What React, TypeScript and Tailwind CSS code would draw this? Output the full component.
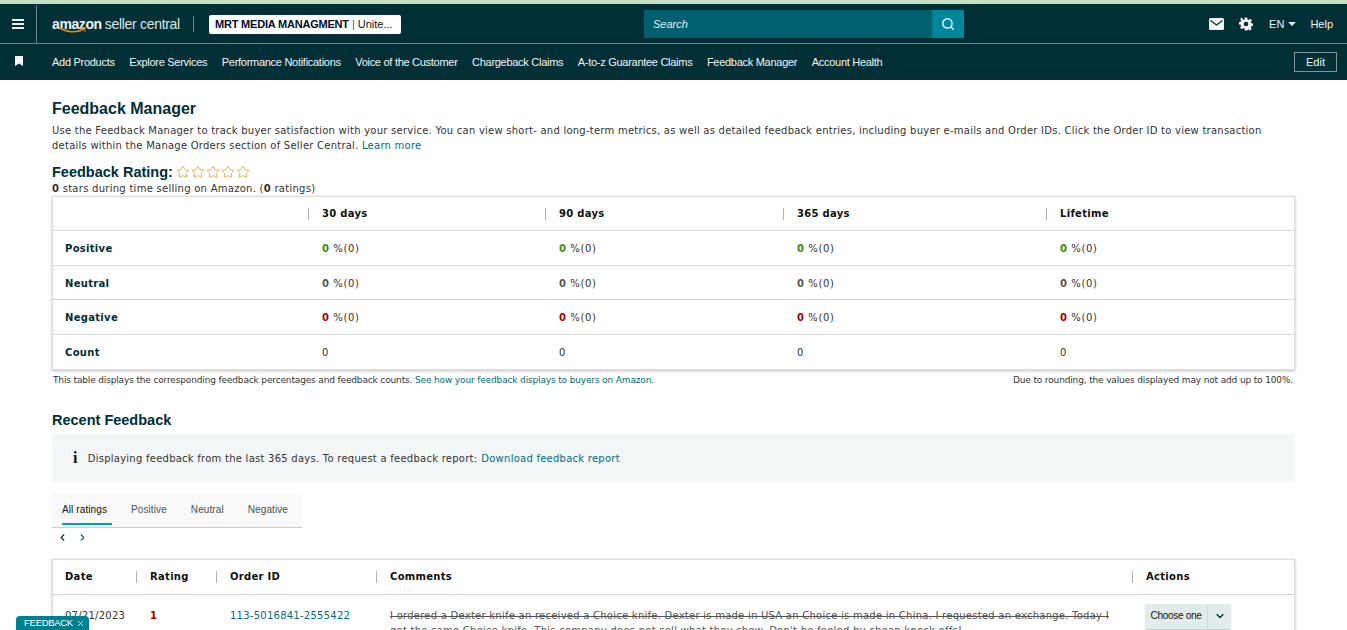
import { ChevronDown, ChevronLeft, ChevronRight, Search, Star, X } from "lucide-react";

const navLinks = [
  "Add Products",
  "Explore Services",
  "Performance Notifications",
  "Voice of the Customer",
  "Chargeback Claims",
  "A-to-z Guarantee Claims",
  "Feedback Manager",
  "Account Health",
];

const periods = ["30 days", "90 days", "365 days", "Lifetime"];

const ratingRows = [
  { label: "Positive", color: "text-[#3d8c0a]" },
  { label: "Neutral", color: "text-[#555555]" },
  { label: "Negative", color: "text-[#a80000]" },
];

const statsGrid = "grid grid-cols-[255px_237px_238px_263px_1fr]";
const feedbackGrid = "grid grid-cols-[83px_80px_160px_756px_1fr]";

function Header() {
  return (
    <header className="bg-[#002f36] text-white font-['Liberation_Sans',sans-serif]">
      <div className="flex h-[39px] items-center border-b border-[#6b8589]">
        <div className="flex h-full w-[37px] items-center justify-center border-r border-[#6b8589]">
          <svg width="12" height="10" viewBox="0 0 12 10" fill="#e6eeee">
            <rect y="0" width="12" height="2" />
            <rect y="4" width="12" height="2" />
            <rect y="8" width="12" height="2" />
          </svg>
        </div>
        <div className="relative ml-[15px] flex h-full w-[128px] items-center whitespace-nowrap">
          <span className="text-[14px] leading-none font-bold tracking-[-0.4px] text-[#f2f5f5]">amazon</span>
          <span className="ml-[3px] text-[14px] leading-none tracking-[-0.3px] text-[#dfe7e7]">seller central</span>
          <svg className="absolute top-[22px] left-[7px]" width="28" height="7" viewBox="0 0 28 7" fill="none">
            <path d="M1 1c7 4.500 17 5 24 1" stroke="#f08804" strokeWidth="1.500" />
            <path d="M21 1h5v4" stroke="#f08804" strokeWidth="1" />
          </svg>
        </div>
        <div className="ml-[13px] h-[16px] w-px bg-[#6b8589]" />
        <div className="ml-[15px] flex h-[19px] w-[192px] items-center rounded-[2px] bg-white px-[6px] text-[11px] whitespace-nowrap text-[#0f1111]">
          <span className="font-bold tracking-[-0.2px] text-[#000c2a]">MRT MEDIA MANAGMENT</span>
          <span className="mx-[3px] text-[#6c3d91]">|</span>
          <span>Unite...</span>
        </div>
        <div className="ml-[243px] flex h-[28px] w-[320px]">
          <div className="flex flex-1 items-center bg-[#005f6f] pl-[9px] text-[11px] text-[#e3eeef] italic">Search</div>
          <div className="flex w-[32px] items-center justify-center bg-[#00869b]">
            <Search size={14} strokeWidth={2.500} className="text-[#e6f3f5]" />
          </div>
        </div>
        <div className="ml-auto flex items-center pr-[14px] text-[11px] text-[#f0f4f4]">
          <svg width="15" height="12" viewBox="0 0 15 12">
            <rect width="15" height="12" rx="1.500" fill="#f4f6f6" />
            <path d="M1.500 2.500 7.500 7l6-4.500" fill="none" stroke="#002f36" strokeWidth="1.300" />
          </svg>
          <svg className="ml-[15px]" width="14" height="14" viewBox="0 0 24 24" fill="#f4f6f6">
            <path
              fillRule="evenodd"
              d="M10 1h4l.6 3.200 1.900.8 2.700-1.800 2.800 2.800-1.800 2.700.8 1.900 3 .6v4l-3 .6-.8 1.900 1.800 2.700-2.800 2.800-2.700-1.800-1.900.8L14 23h-4l-.6-3.200-1.900-.8-2.700 1.800-2.800-2.800 1.800-2.700-.8-1.900-3-.6v-4l3-.6.8-1.900-1.800-2.700 2.800-2.800L7.500 5l1.900-.8zM12 8a4 4 0 1 0 0 8 4 4 0 0 0 0-8z"
            />
          </svg>
          <span className="ml-[16px]">EN</span>
          <span className="mb-[1px] ml-[4px] h-0 w-0 border-x-[4px] border-t-[4px] border-x-transparent border-t-[#dfe7e7]" />
          <span className="ml-[14px]">Help</span>
        </div>
      </div>
      <div className="flex h-[36px] items-center">
        <div className="flex w-[37px] justify-center pb-[2px]">
          <svg width="8" height="10" viewBox="0 0 8 10" fill="#f4f6f6">
            <path d="M0 0h8v10L4 7.500 0 10z" />
          </svg>
        </div>
        <nav className="ml-[15px] flex gap-[14.500px] text-[11px] tracking-[-0.28px] whitespace-nowrap text-[#f2f6f6]">
          {navLinks.map((link) => (
            <span key={link}>{link}</span>
          ))}
        </nav>
        <button className="mr-[10px] ml-auto h-[20px] w-[43px] border border-[#7d9397] text-[11px] text-[#f2f6f6]">Edit</button>
      </div>
    </header>
  );
}

function StatsTable() {
  return (
    <div className="w-[1243px] border border-[#dddddd] text-[10px] text-[#0f1111] shadow-[0_1px_3px_rgba(0,0,0,0.25)]">
      <div className={`${statsGrid} h-[33px] items-center`}>
        <div />
        {periods.map((period) => (
          <div key={period} className="flex h-[12px] items-center border-l border-[#a9b7b9] pl-[13px] font-bold tracking-[0.3px]">
            {period}
          </div>
        ))}
      </div>
      {ratingRows.map((row) => (
        <div key={row.label} className={`${statsGrid} h-[34.700px] items-center border-t border-[#d5dbdb] pt-[1px]`}>
          <div className="pl-[12px] font-bold tracking-[0.3px] text-[#002f36]">{row.label}</div>
          {periods.map((period) => (
            <div key={period} className="pl-[14px] tracking-[0.6px] text-[#333333]">
              <span className={`font-bold ${row.color}`}>0</span> %(0)
            </div>
          ))}
        </div>
      ))}
      <div className={`${statsGrid} h-[34.700px] items-center border-t border-[#d5dbdb] pt-[1px]`}>
        <div className="pl-[12px] font-bold tracking-[0.3px] text-[#002f36]">Count</div>
        {periods.map((period) => (
          <div key={period} className="pl-[14px] text-[#333333]">
            0
          </div>
        ))}
      </div>
    </div>
  );
}

function RecentFeedback() {
  return (
    <>
      <h2 className="mt-[24px] text-[14.500px] leading-[20px] font-bold text-[#002f36] font-['Liberation_Sans',sans-serif]">Recent Feedback</h2>
      <div className="mt-[4px] flex h-[48px] w-[1243px] items-center bg-[#f3f7f8] pt-[1px] text-[10px] tracking-[0.25px] text-[#333333]">
        <span className="ml-[21px] text-[16px] font-bold text-[#111111] font-['Liberation_Serif',serif]">i</span>
        <span className="ml-[10px]">Displaying feedback from the last 365 days. To request a feedback report:</span>
        <span className="ml-[4px] text-[#006d80]">Download feedback report</span>
      </div>
      <div className="mt-[11px] flex h-[35px] w-[250px] border-b border-[#c8cdcd] bg-[#f9f9f9] pl-[10px] text-[10px] leading-[33px] tracking-[0.1px] text-[#485555] font-['Liberation_Sans',sans-serif]">
        <span className="h-[32px] w-[50px] border-b-2 border-[#00a3b8] text-[#0f1111]">All ratings</span>
        <span className="ml-[19px]">Positive</span>
        <span className="ml-[24px]">Neutral</span>
        <span className="ml-[24px]">Negative</span>
      </div>
      <div className="mt-[1px] ml-[5px] flex h-[18px] items-center gap-[9px]">
        <ChevronLeft size={11} strokeWidth={2.500} className="text-[#002f36]" />
        <ChevronRight size={11} strokeWidth={2.500} className="text-[#006d80]" />
      </div>
      <div className="mt-[12px] w-[1243px] border border-[#dddddd] text-[10px] shadow-[0_1px_3px_rgba(0,0,0,0.25)]">
        <div className={`${feedbackGrid} h-[34px] items-center font-bold tracking-[0.3px] text-[#0f1111]`}>
          <div className="pl-[12px]">Date</div>
          <div className="flex h-[12px] items-center border-l border-[#a9b7b9] pl-[13px]">Rating</div>
          <div className="flex h-[12px] items-center border-l border-[#a9b7b9] pl-[13px]">Order ID</div>
          <div className="flex h-[12px] items-center border-l border-[#a9b7b9] pl-[13px]">Comments</div>
          <div className="flex h-[12px] items-center border-l border-[#a9b7b9] pl-[13px]">Actions</div>
        </div>
        <div className={`${feedbackGrid} h-[60px] border-t border-[#d5dbdb] pt-[13px] leading-[15px] tracking-[0.25px] text-[#333333]`}>
          <div className="pl-[12px]">07/21/2023</div>
          <div className="pl-[14px] font-bold text-[#a80000]">1</div>
          <div className="pl-[14px] text-[#006d80]">113-5016841-2555422</div>
          <div className="pr-[10px] pl-[14px] text-[#555555] line-through">
            I ordered a Dexter knife an received a Choice knife. Dexter is made in USA an Choice is made in China. I requested an exchange. Today I got the same Choice knife. This company does not sell what they show. Don't be fooled by cheap knock offs!
          </div>
          <div className="pl-[13px]">
            <div className="-mt-[4px] flex h-[25px] w-[86px] items-center rounded-[2px] bg-[#e3ecec] pb-[1px] tracking-[-0.3px] text-[#0f1111] shadow-[0_1px_1px_rgba(0,0,0,0.2)] font-['Liberation_Sans',sans-serif]">
              <span className="flex h-full w-[63px] items-center justify-center border-r border-[#d0dada]">Choose one</span>
              <span className="flex flex-1 justify-center">
                <ChevronDown size={12} strokeWidth={2.500} className="text-[#002f36]" />
              </span>
            </div>
          </div>
        </div>
      </div>
    </>
  );
}

export default function App() {
  return (
    <div className="relative h-[630px] overflow-hidden bg-white font-['DejaVu_Sans',Verdana,sans-serif]">
      <div className="h-[4px] bg-[#c5dfc4]" />
      <div className="h-px bg-[#002f36]" />
      <Header />
      <main className="pl-[52px]">
        <h1 className="mt-[19px] text-[16px] leading-[20px] font-bold text-[#002f36] font-['Liberation_Sans',sans-serif]">Feedback Manager</h1>
        <p className="mt-[4px] w-[1243px] text-[10px] leading-[15px] tracking-[0.24px] text-[#333333]">
          Use the Feedback Manager to track buyer satisfaction with your service. You can view short- and long-term metrics, as well as detailed feedback entries, including buyer e-mails and Order IDs. Click the Order ID to view transaction details within the Manage Orders section of Seller Central. <span className="text-[#006d80]">Learn more</span>
        </p>
        <div className="mt-[12px] flex h-[16px] items-center">
          <span className="text-[14.500px] font-bold text-[#002f36] font-['Liberation_Sans',sans-serif]">Feedback Rating:</span>
          <span className="mb-[2px] ml-[3px] flex gap-[1px]">
            {[0, 1, 2, 3, 4].map((i) => (
              <Star key={i} size={14} strokeWidth={1.500} className="text-[#d9a441]" />
            ))}
          </span>
        </div>
        <p className="mt-[1px] text-[10px] leading-[14px] tracking-[0.27px] text-[#333333]">
          <b>0</b> stars during time selling on Amazon. (<b>0</b> ratings)
        </p>
        <StatsTable />
        <div className="mt-[4px] flex w-[1241px] justify-between pl-[1px] text-[9px] leading-[12px] tracking-[-0.15px] text-[#333333]">
          <span>
            This table displays the corresponding feedback percentages and feedback counts. <span className="text-[#006d80]">See how your feedback displays to buyers on Amazon.</span>
          </span>
          <span>Due to rounding, the values displayed may not add up to 100%.</span>
        </div>
        <RecentFeedback />
      </main>
      <div className="absolute bottom-0 left-[16px] flex h-[14px] w-[73px] items-center justify-center gap-[3px] rounded-t-[4px] bg-[#00808f] pl-[4px] text-[9.500px] tracking-[-0.3px] text-white font-['Liberation_Sans',sans-serif]">
        FEEDBACK
        <X size={9} />
      </div>
    </div>
  );
}
